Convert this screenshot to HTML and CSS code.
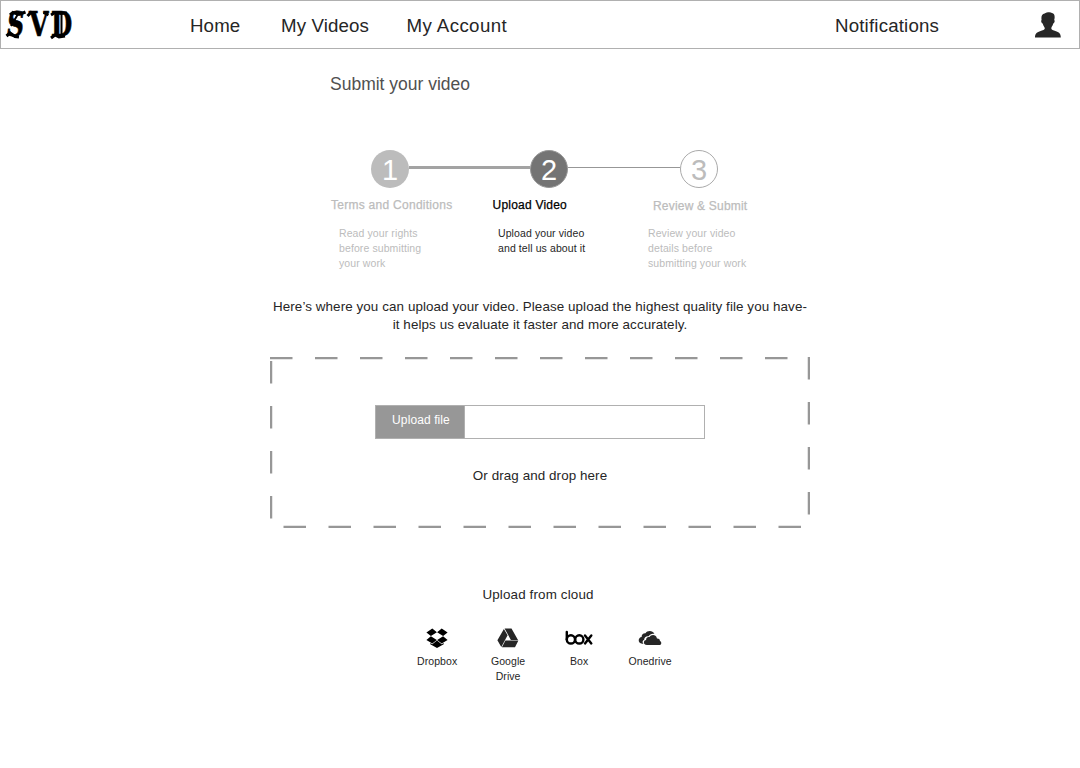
FILE: index.html
```html
<!DOCTYPE html>
<html lang="en">
<head>
<meta charset="utf-8">
<title>Submit your video</title>
<link rel="stylesheet" href="styles.css">
</head>
<body>
<header class="topbar">
  <a class="logo">
    <span class="logo-text"><span class="slant">S</span><span class="vee">V</span><span>D</span></span>
    <svg class="flourish" viewBox="0 0 74 46" width="74" height="46" fill="none" stroke="#000"><path stroke-width="2" d="M17 12L10 24M60.500 12V33"/><path stroke-width="3" d="M5.500 34L9 31L14 34.500L18 35M9 13L12 10.500L18 12.500L24.500 10M26.500 14L30 10.500L34 13M42.500 10.500L47.500 13M50 13L54 10.500L60 11.500L66 11M50 36L54 33L58 35L64 34"/></svg>
  </a>
  <nav class="nav">
    <a class="nav-home">Home</a>
    <a class="nav-videos">My Videos</a>
    <a class="nav-account">My Account</a>
  </nav>
  <a class="notifications">Notifications</a>
  <svg class="avatar" viewBox="0 0 26 26" width="26" height="26"><path fill="#262626" d="M0 25.500C0 22 1.500 20.500 5 19.300C8 18.300 9.700 17.800 9.800 16.500C9.800 15 8.300 14.300 7.700 11.600C6.300 11.300 5.700 8.500 6.600 8C6 4.500 6.800 2.200 9.600 1.500C11.500 .2 15.500 -.2 17 .9C19.600 1.200 20.200 4.500 19.200 8C20.200 8.500 19.500 11.300 18.200 11.600C17.700 14.200 16.300 15 16.300 16.500C16.300 17.800 18 18.300 21 19.300C24.500 20.500 25.800 22 25.800 25.500Z"/></svg>
</header>

<main class="page">
  <h1 class="title">Submit your video</h1>

  <div class="track">
    <span class="dot done">1</span>
    <span class="line thick"></span>
    <span class="dot current">2</span>
    <span class="line"></span>
    <span class="dot todo">3</span>
  </div>
  <div class="steps">
    <section class="step first">
      <h2>Terms and Conditions</h2>
      <p>Read your rights<br>before submitting<br>your work</p>
    </section>
    <section class="step active">
      <h2>Upload Video</h2>
      <p>Upload your video<br>and tell us about it</p>
    </section>
    <section class="step last">
      <h2>Review &amp; Submit</h2>
      <p>Review your video<br>details before<br>submitting your work</p>
    </section>
  </div>

  <p class="intro">Here’s where you can upload your video. Please upload the highest quality file you have-<br>it helps us evaluate it faster and more accurately.</p>

  <section class="dropzone">
    <svg class="dashes" viewBox="0 0 540 171" width="540" height="171" fill="none" stroke="#979797" stroke-width="2.250" stroke-dasharray="22.500">
      <path d="M0 1.120H540"/>
      <path d="M1.120 4V171"/>
      <path d="M538.870 0V171"/>
      <path d="M13.500 169.870H540"/>
    </svg>
    <div class="file-field">
      <button class="file-button">Upload file</button>
      <div class="file-name"></div>
    </div>
    <p class="drop-hint">Or drag and drop here</p>
  </section>

  <h3 class="cloud-title">Upload from cloud</h3>
  <div class="clouds">
    <a class="cloud dropbox">
      <svg viewBox="0 0 22 20" width="22" height="20"><path fill="#000" d="M6.300 .5L10.900 4.200L4.900 7.900L.4 4.500ZM15.700 .5L21.600 4.500L17.100 7.900L11.100 4.200ZM4.900 8.200L10.800 12L6.300 15.500L.4 11.900ZM17.100 8.200L21.600 11.900L15.700 15.500L11.200 12ZM11 12.600L15.700 16.300L17.700 15.100V16.200L11 20L4.300 16.200V15.100L6.300 16.300Z"/></svg>
      <span>Dropbox</span>
    </a>
    <a class="cloud gdrive">
      <svg viewBox="0 0 22 20" width="22" height="20"><path fill="#262626" d="M6.900 1L10.600 7.200L4.300 19L.4 12.200ZM7.600 .6H14.500L21 11.900H13.900ZM8.400 12.500H21.400L18 19.200H4.900Z"/></svg>
      <span>Google<br>Drive</span>
    </a>
    <a class="cloud box">
      <svg viewBox="0 0 28 20" width="28" height="20" fill="none" stroke="#000" stroke-width="2.400" stroke-linecap="round"><path d="M1.800 4V11.400"/><circle cx="5.900" cy="11.400" r="4.100"/><circle cx="14.300" cy="11.400" r="4.100"/><path d="M20 7.500L26.300 15.400M26.300 7.500L20 15.400"/></svg>
      <span>Box</span>
    </a>
    <a class="cloud onedrive">
      <svg viewBox="0 0 24 20" width="24" height="20"><path fill="#262626" d="M5.500 15.800H4.200C1.800 15.500 .5 13.900 .7 12C.9 10.200 2 9.100 3.600 8.900C3.700 6.300 5.200 5 7.500 5.200C9 2.400 14.500 1.700 16.400 5.800C13.900 5.300 11.800 6.100 10.600 8.300C7.900 8 6.300 9.400 6.200 11.700C4.300 12.400 4.100 14.500 5.500 15.800ZM9 17C6.600 16.900 5.700 15.500 5.900 14.200C6.100 12.900 7 12.200 8.100 12.100C7.900 9.900 9.600 8.500 11.500 9.100C12.700 6.300 17.900 5.800 19 10.400C21.100 10.300 22.100 11.600 21.900 12.900C23.900 13.500 23.800 16.900 21.400 17Z"/></svg>
      <span>Onedrive</span>
    </a>
  </div>
</main>
</body>
</html>
```
FILE: styles.css
```css
* { box-sizing: border-box; }

body {
  margin: 0;
  background: #fff;
  color: #262626;
  font-family: "Liberation Sans", Arial, sans-serif;
}

h1, h2, h3, p { margin: 0; font-weight: normal; }

.topbar {
  display: flex;
  align-items: center;
  height: 49px;
  border: 1px solid #b0b0b0;
  font-size: 18.7px;
  letter-spacing: 0.12px;
  line-height: 24px;
}

.logo { position: relative; width: 189px; height: 46px; }
.logo-text {
  display: flex;
  width: 66px;
  margin-left: 6px;
  color: #000;
  font-family: "DejaVu Serif Condensed", "DejaVu Serif", serif;
  font-size: 34px;
  font-weight: bold;
  letter-spacing: 0;
  line-height: 45px;
  -webkit-text-stroke: 0.6px #000;
}
.logo-text span { width: 22px; transform: scaleX(0.8); transform-origin: 0 50%; }
.logo-text .slant { transform: scaleX(0.78) skewX(-9deg); }
.logo-text .vee { transform: scaleX(0.82); }
.flourish { position: absolute; left: 0; top: 0; }

.nav { display: flex; width: 645px; padding-top: 2px; }
.nav-home { width: 91px; }
.nav-videos { width: 125px; }
.nav-account { padding-left: 0.5px; letter-spacing: 0.4px; }
.notifications { width: 200px; padding-top: 2px; letter-spacing: 0.18px; }
.avatar { display: block; }

.page { padding-top: 23px; }

.title {
  margin-left: 330px;
  color: #505050;
  font-size: 17.5px;
  line-height: 24px;
}

.track {
  display: flex;
  align-items: center;
  margin: 53px 0 0 371px;
  height: 39px;
}
.dot {
  width: 38px;
  height: 38px;
  border-radius: 50%;
  font-size: 29px;
  line-height: 40px;
  text-align: center;
}
.done { background: #bcbcbc; color: #fff; }
.current { background: #747474; color: #fff; border: 1px solid #979797; line-height: 38px; }
.todo { border: 1px solid #aaa; color: #bcbcbc; line-height: 38px; }
.line { width: 112px; height: 1px; margin-bottom: 3px; background: #979797; }
.thick { width: 121px; height: 3px; background: #a3a3a3; }

.steps { display: flex; height: 93px; padding: 9px 0 0 330px; }
.step { width: 159px; color: #bcbcbc; }
.active { width: 150px; color: #262626; }
.step h2 {
  padding-left: 1px;
  font-size: 12px;
  letter-spacing: 0.27px;
  line-height: 16px;
  -webkit-text-stroke: 0.25px currentColor;
}
.step p {
  padding: 13px 0 0 9px;
  font-size: 10.5px;
  letter-spacing: 0.1px;
  line-height: 15px;
}
.step.active h2 { padding-left: 3.5px; color: #000; letter-spacing: 0.22px; }
.step.last h2 { padding: 1px 0 0 14px; letter-spacing: 0.2px; }
.step.last p { padding-top: 12px; }

.intro {
  margin-top: 17px;
  font-size: 13.4px;
  letter-spacing: 0.09px;
  line-height: 18px;
  text-align: center;
}

.dropzone {
  position: relative;
  width: 540px;
  height: 171px;
  margin: 23px auto 0;
  padding: 48px 105px 0;
}
.dashes { position: absolute; inset: 0; }

.file-field { display: flex; width: 330px; height: 34px; border: 1px solid #b0b0b0; }
.file-button {
  width: 89px;
  padding: 0 0 4px 2px;
  border: 0;
  border-right: 1px solid #b0b0b0;
  background: #979797;
  color: #fff;
  font: 12px "Liberation Sans", Arial, sans-serif;
  letter-spacing: 0.1px;
}
.file-name { flex: 1; }
.drop-hint {
  padding-top: 28px;
  font-size: 13.4px;
  letter-spacing: 0.09px;
  line-height: 18px;
  text-align: center;
}

.cloud-title {
  margin-top: 58px;
  padding-right: 4px;
  font-size: 13.4px;
  letter-spacing: 0.15px;
  line-height: 18px;
  text-align: center;
}
.clouds { display: flex; margin: 24px 0 0 401.6px; }
.cloud {
  display: flex;
  flex-direction: column;
  align-items: center;
  width: 71px;
  font-size: 10.5px;
  letter-spacing: 0.08px;
  line-height: 15px;
  text-align: center;
}
.cloud span { margin-top: 6px; }
```
